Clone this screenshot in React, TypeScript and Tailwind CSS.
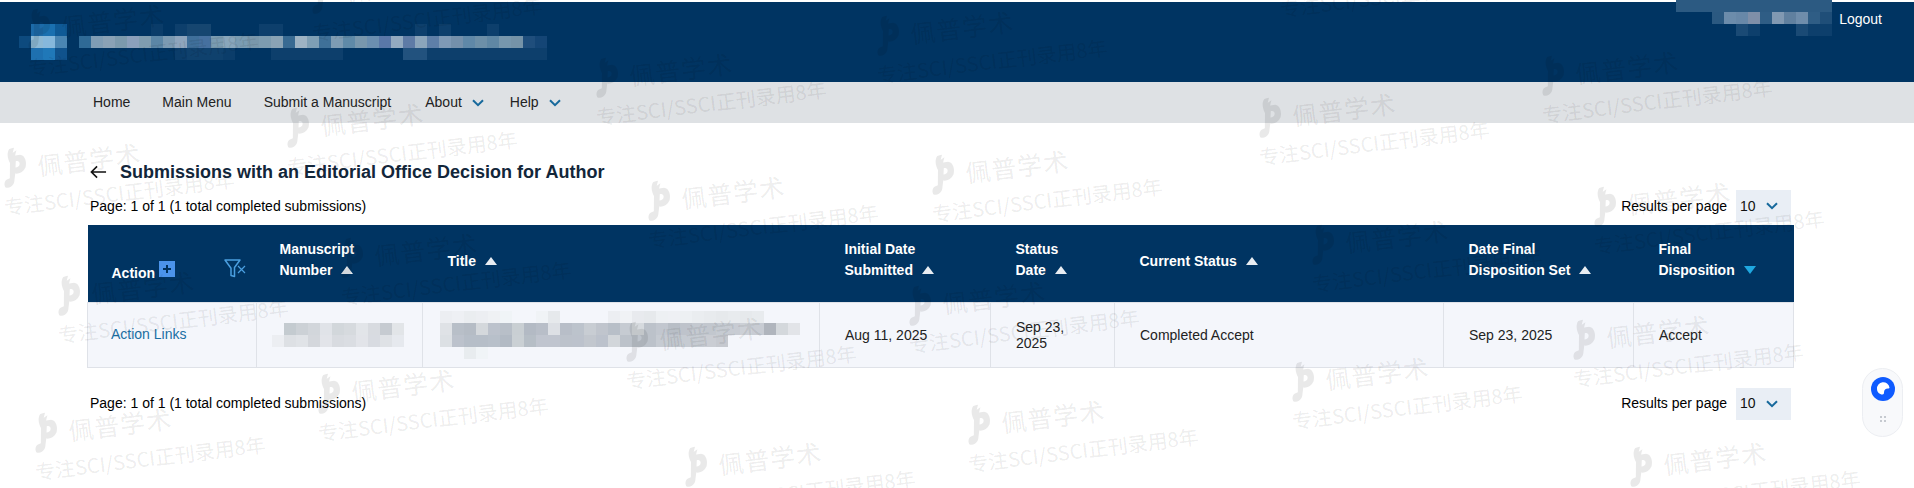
import React from 'react';

// left end of the second watermark line, in page pixels
const marks: [number, number][] = [
  [30, 82], [314, 47], [879, 89], [1282, 23], [598, 131], [1544, 129], [289, 181],
  [6, 221], [650, 254], [934, 228], [1261, 171], [1596, 260], [1314, 298], [60, 349],
  [343, 311], [911, 359], [628, 395], [1575, 393], [1294, 435], [320, 447], [37, 486],
  [970, 478], [687, 520], [1632, 520],
];

const bandColors = [
  '#2f6a96', '#7f9db5', '#8aa2b6', '#7c9aad', '#8ba0bb', '#7f9db0', '#5b86a6', '#7b9ab2', '#8ea5bd', '#3f6f9a',
  '#46709f', '#7a9bb1', '#89a6bb', '#7b9cb2', '#7997ab', '#7d9cb0', '#8aa3b5', '#386a92', '#9db3c4', '#7e9fb5',
  '#3f7098', '#7e9cb3', '#5f8aa8', '#7897ad', '#6b8fb0', '#5a78a8', '#93aac0', '#5e7ba6', '#8ba5bb', '#5e7fa8',
  '#7e99b5', '#7490ab', '#5f88a8', '#6c8fa8', '#5f87a4', '#7797ad', '#7593a8', '#1f4e7c', '#144575',
];

const ms1 = ['', '#c4cbd0', '#ccd1d6', '#d2d6db', '#e0e3e8', '#d2d7db', '#d6dade', '#e2e5e9', '#d8dbe0', '#c6cbd1', '#e2e5e8'];
const ms2 = ['#eceef2', '#dde0e4', '#e0e3e7', '#d4d7dc', '#e2e4e9', '#d8dbe0', '#dadde2', '#e2e4e9', '#d8dbe1', '#dfe2e6', '#e6e9ee'];

const title0 = ['#eceef2', '#eef0f4', '#eaedf0', '#eceef2', '#eff1f4', '#f0f4f7', '', '', '#f0f3f6', '#e6e9ec', '', '', '', '', '#eceef2', '#f0f2f5', '#e8eaee', '#e6e9ec', '#edf0f3', '#eef0f4', '#edf0f3', '#eaedf0', '#e8ebee', '#e6e9ec', '#e8ebee', '#e6e9ec', '#e8ebee', '', '', ''];
const title1 = ['#dfe2e6', '#b8bfc8', '#b5bcc5', '#d4d8dc', '#bcc2cc', '#b8bfc8', '#c9cfd3', '#b3bac4', '#b8bec8', '#dde0e5', '#b8bec8', '#bcc3cc', '#c8cdd3', '#c0c5cd', '#b8bfc8', '#c6cbd2', '#d6dade', '#bcc2ca', '#c2c7cf', '#b8bec6', '#bec3cb', '#c4c9d0', '#c2c7ce', '#c6cbd2', '#c8ccd3', '#ccd0d6', '#c8ccd3', '#b0b5bd', '#d4d8dc', '#e2e4e8'];
const title2 = ['#dce0e4', '#bcc2cc', '#b6bec8', '#b6bec8', '#b8c0ca', '#b2bac4', '#cad0d4', '#b6bec6', '#c0c5cf', '#c0c5cf', '#bcc2cb', '#bcc2cc', '#c2c7ce', '#bcc2cc', '#d2d6da', '#bcc2ca', '#bec4cc', '#bcc2ca', '#c6cbd2', '#c0c6cd', '#c6cbd2', '#c6cbd2', '#cacdd3', '#c6c9cf', '', '', '', '', '', ''];
const title3 = ['', '', '#e8ecef', '#f0f4f7'];

type MosaicProps = { rows: string[][]; cols: number; className?: string };

// pixelated block, every cell is 12px
function Mosaic({ rows, cols, className }: MosaicProps) {
  return (
    <svg width={cols * 12} height={rows.length * 12} className={className} shapeRendering="crispEdges">
      {rows.map((row, y) =>
        row.map((fill, x) => (fill ? <rect key={`${x}-${y}`} x={x * 12} y={y * 12} width="12" height="12" fill={fill} /> : null)),
      )}
    </svg>
  );
}

function Chevron({ className }: { className?: string }) {
  return (
    <svg width="12" height="8" viewBox="0 0 12 8" fill="none" className={className}>
      <path d="M1 1.2 6 6.2 11 1.2" stroke="#17699c" strokeWidth="2" />
    </svg>
  );
}

function Sort({ color = '#e8edf2' }: { color?: string }) {
  return (
    <svg width="12" height="8" viewBox="0 0 12 8" className="relative -top-[1px] ml-[9px] inline-block align-baseline">
      <polygon points={color === '#e8edf2' ? '6,0 12,8 0,8' : '0,0 12,0 6,8'} fill={color} />
    </svg>
  );
}

function Watermark({ x, y }: { x: number; y: number }) {
  return (
    <div
      className="absolute origin-bottom-left -rotate-[7deg] whitespace-nowrap font-['Noto_Sans_CJK_SC',sans-serif] text-black/[0.085]"
      style={{ left: x, top: y - 73 }}
    >
      <div className="flex h-[42px] items-center pl-[2px]">
        <svg width="26" height="40" viewBox="0 0 26 40" fill="currentColor">
          <path d="M10 1 15 0 13 5 17 3 15 8 20 8C25 9 26 16 24 21 21 26 16 27 13 26L11 34C10 38 5 40 2 39 0 37 1 32 4 31L7 30 9 15C7 10 7 4 10 1ZM15 14 14 20C16 20 18 19 18.500 17 19 15 17 13 15 14Z" />
        </svg>
        <span className="ml-[10px] text-[25px] leading-none tracking-[1px]">佩普学术</span>
      </div>
      <div className="mt-[3px] text-[20px] leading-[28px]">专注SCI/SSCI正刊录用8年</div>
    </div>
  );
}

function Pager() {
  return (
    <div className="flex h-8 items-center justify-between pl-[3px] pr-[2px] text-[14px] text-black">
      <span>Page: 1 of 1 (1 total completed submissions)</span>
      <div className="flex items-center">
        <span>Results per page</span>
        <div className="ml-[9px] flex h-8 w-[55px] items-center bg-[#e9eef5] pl-[4px]">
          <span className="text-[#111]">10</span>
          <Chevron className="ml-[10px]" />
        </div>
      </div>
    </div>
  );
}

const thOne = 'px-[25px] pb-[4px] text-left align-middle text-[14px] font-bold leading-[21px] text-white';
const thTwo = 'px-[25px] pb-[7px] text-left align-middle text-[14px] font-bold leading-[21px] text-white';
const tdClass = 'border-l border-[#dfe2e8] px-[25px] align-middle text-[14px] leading-4 text-[#222]';
const tdBlur = 'border-l border-[#dfe2e8] align-middle';

export default function App() {
  return (
    <div className="relative h-[488px] overflow-hidden bg-white pt-[2px] font-['Liberation_Sans',Arial,sans-serif]">
      <header className="flex h-20 items-start justify-between bg-[#003462]">
        <div className="mt-[22px] flex pl-[19px]">
          <Mosaic
            cols={5}
            rows={[
              ['', '#1c6aa8', '#1a70b0', '#0f5a96', ''],
              ['#0d4a7e', '#8cb8d4', '#86b8dc', '#4a85b2', ''],
              ['', '#1e70b0', '#2078b8', '#10528c', ''],
            ]}
          />
          <Mosaic
            cols={39}
            rows={[
              ['', '', '', '', '', '', '#0a3c69', '', '#0d3f6c', '#164670', '#164670', '', '', '', '', '#0d3f6c', '#0d3f6c', '', '', '', '', '', '', '', '', '', '', '', '#0d3f6c', '', '#0d3f6c', '', '', '', '#0d3f6c', '', '', '', ''],
              bandColors,
              ['', '', '', '', '', '', '', '', '#0b3d6a', '#0f416d', '#0f416d', '#0f416d', '#0b3d6a', '', '', '', '#0d3f6c', '#0d3f6c', '#0d3f6c', '#0d3f6c', '#0d3f6c', '#0d3f6c', '', '', '', '', '', '#22527e', '#22527e', '#0d3f6c', '#0d3f6c', '#0d3f6c', '#0d3f6c', '#0d3f6c', '#0d3f6c', '#0d3f6c', '#0d3f6c', '#0d3f6c', '#0d3f6c'],
            ]}
          />
        </div>
        <div className="-mt-[2px] flex pr-[32px]">
          <Mosaic
            cols={13}
            rows={[
              ['#2c5a82', '#2c5a82', '#2c5a82', '#2c5a82', '#2c5a82', '#2c5a82', '#2c5a82', '#2c5a82', '#2c5a82', '#2c5a82', '#2c5a82', '#2c5a82', '#2c5a82'],
              ['', '', '', '#2b5981', '#6c8cab', '#6888a8', '#7f8fa8', '#2f5d85', '#8199b2', '#60809f', '#6f8dab', '#2f5d85', '#1f4e78'],
              ['', '', '', '', '', '#1a4a75', '#0d3f6c', '', '', '', '#1a4a75', '#0d3f6c', '#0d3f6c'],
            ]}
            className="-ml-[2px]"
          />
          <span className="ml-[7px] mt-[10px] text-[14px] leading-[18px] text-white">Logout</span>
        </div>
      </header>

      <nav className="flex h-[41px] items-center gap-8 bg-[#dee1e4] pl-[93px] text-[14px] text-[#222]">
        <span>Home</span>
        <span>Main Menu</span>
        <span>Submit a Manuscript</span>
        <span className="ml-[2px] flex items-center gap-[10px]">
          About
          <Chevron />
        </span>
        <span className="-ml-[6px] flex items-center gap-[10px]">
          Help
          <Chevron />
        </span>
      </nav>

      <main className="ml-[87px] w-[1706px]">
        <div className="mt-[37px] flex h-6 items-center">
          <svg width="17" height="14" viewBox="0 0 18 14" fill="none" className="ml-[3px]">
            <path d="M17 7H2M7.500 1 1.500 7 7.500 13" stroke="#111" strokeWidth="1.700" />
          </svg>
          <h1 className="ml-[13px] text-[18px] font-bold text-[#12263a]">Submissions with an Editorial Office Decision for Author</h1>
        </div>
        <div className="mt-[6px]">
          <Pager />
        </div>

        <table className="mt-[3px] w-[1706px] table-fixed border-collapse">
          <colgroup>
            <col className="w-[169px]" />
            <col className="w-[166px]" />
            <col className="w-[397px]" />
            <col className="w-[171px]" />
            <col className="w-[124px]" />
            <col className="w-[329px]" />
            <col className="w-[190px]" />
            <col className="w-[160px]" />
          </colgroup>
          <thead>
            <tr className="h-[77px] bg-[#003462]">
              <th className="pl-[24px] pr-[10px] text-left align-middle text-[14px] font-bold leading-[21px] text-white">
                <div className="mt-[20px] flex items-center">
                  <span>Action</span>
                  <span className="relative -top-[4px] ml-[4px] flex h-4 w-4 items-center justify-center bg-[#4b93ea]">
                    <svg width="10" height="10" viewBox="0 0 10 10">
                      <path d="M5 1v8M1 5h8" stroke="#00315c" strokeWidth="2" />
                    </svg>
                  </span>
                  <svg width="22" height="19" viewBox="0 0 22 19" fill="none" className="relative -top-[5px] ml-[49px]">
                    <path d="M1 1H16L10.500 8.500V17.500L7 16.500V9.200Z" stroke="#4a9fe0" strokeWidth="1.500" strokeLinejoin="round" />
                    <path d="M14 7 21 14M21 7 14 14" stroke="#4a9fe0" strokeWidth="1.200" />
                  </svg>
                </div>
              </th>
              <th className={`${thTwo} !pl-[23px]`}>
                Manuscript
                <br />
                Number
                <Sort />
              </th>
              <th className={thOne}>
                Title
                <Sort />
              </th>
              <th className={thTwo}>
                Initial Date
                <br />
                Submitted
                <Sort />
              </th>
              <th className={thTwo}>
                Status
                <br />
                Date
                <Sort />
              </th>
              <th className={thOne}>
                Current Status
                <Sort />
              </th>
              <th className={thTwo}>
                Date Final
                <br />
                Disposition Set
                <Sort />
              </th>
              <th className={thTwo}>
                Final
                <br />
                Disposition
                <Sort color="#1fa8e0" />
              </th>
            </tr>
          </thead>
          <tbody>
            <tr className="h-[65px] border border-[#dfe2e8] bg-[#f4f6fb]">
              <td className="pl-[23px] text-[14px] text-[#1a6fa3]">Action Links</td>
              <td className={tdBlur}>
                <Mosaic cols={11} rows={[ms1, ms2]} className="ml-[15px]" />
              </td>
              <td className={tdBlur}>
                <Mosaic cols={30} rows={[title0, title1, title2, title3]} className="ml-[17px]" />
              </td>
              <td className={tdClass}>Aug 11, 2025</td>
              <td className={tdClass}>Sep 23, 2025</td>
              <td className={tdClass}>Completed Accept</td>
              <td className={tdClass}>Sep 23, 2025</td>
              <td className={tdClass}>Accept</td>
            </tr>
          </tbody>
        </table>

        <div className="mt-[20px]">
          <Pager />
        </div>
      </main>

      {marks.map(([x, y]) => (
        <Watermark key={`${x}-${y}`} x={x} y={y} />
      ))}

      <div className="absolute right-[11px] top-[368px] flex h-[69px] w-[41px] flex-col items-center rounded-full border border-[#eceef2] bg-[#f8f9fb] pt-[8px]">
        <svg width="24" height="24" viewBox="0 0 24 24">
          <circle cx="12" cy="12" r="12" fill="#0f5bff" />
          <path d="M6 12A6.300 6.300 0 0 1 18.500 10.500C18.500 11 18 11.500 17 11.500 14.500 11.500 13 13 13 15.500 13 16.500 12.500 17.500 11.500 17.500 8.500 17.500 6 15 6 12Z" fill="#fff" />
        </svg>
        <svg width="6" height="6" viewBox="0 0 6 6" className="mt-[15px]">
          <path d="M0 0h2v2H0zM4 0h2v2H4zM0 4h2v2H0zM4 4h2v2H4z" fill="#c6cad0" />
        </svg>
      </div>
    </div>
  );
}
